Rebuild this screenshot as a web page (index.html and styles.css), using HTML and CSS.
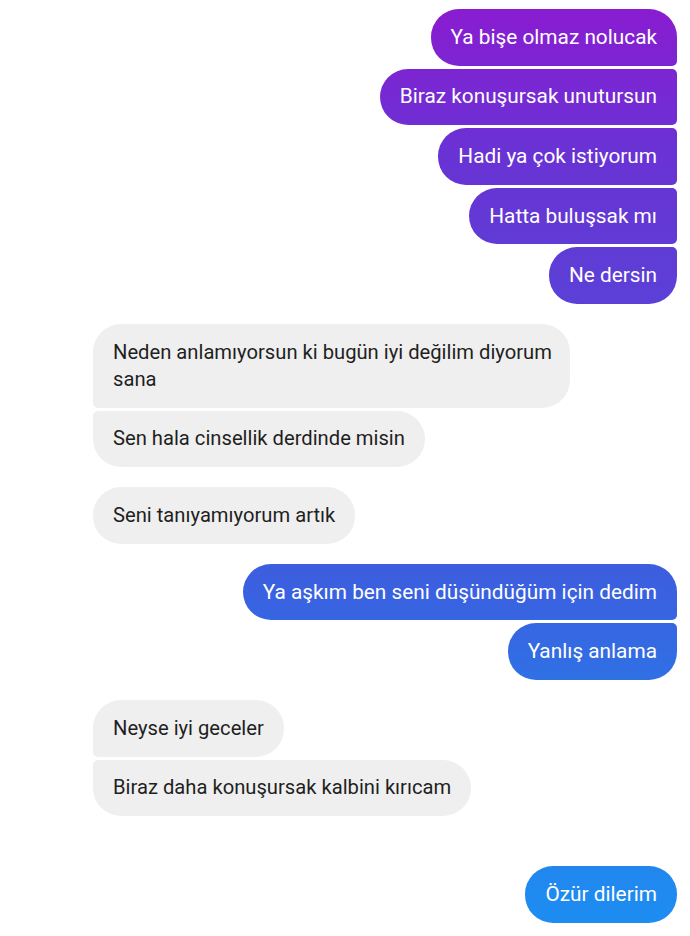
FILE: index.html
```html
<!DOCTYPE html>
<html lang="tr">
<head>
  <meta charset="UTF-8">
  <title>Sohbet</title>
  <link rel="stylesheet" href="styles.css">
</head>
<body>
  <div class="chat">
    <div class="group out">
      <div class="msg">Ya bişe olmaz nolucak</div>
      <div class="msg">Biraz konuşursak unutursun</div>
      <div class="msg">Hadi ya çok istiyorum</div>
      <div class="msg">Hatta buluşsak mı</div>
      <div class="msg">Ne dersin</div>
    </div>

    <div class="group in">
      <div class="msg wide">Neden anlamıyorsun ki bugün iyi değilim diyorum<br>sana</div>
      <div class="msg">Sen hala cinsellik derdinde misin</div>
    </div>

    <div class="group in">
      <div class="msg">Seni tanıyamıyorum artık</div>
    </div>

    <div class="group out">
      <div class="msg">Ya aşkım ben seni düşündüğüm için dedim</div>
      <div class="msg">Yanlış anlama</div>
    </div>

    <div class="group in">
      <div class="msg">Neyse iyi geceler</div>
      <div class="msg">Biraz daha konuşursak kalbini kırıcam</div>
    </div>

    <div class="group out last">
      <div class="msg">Özür dilerim</div>
    </div>
  </div>
</body>
</html>
```

FILE: styles.css
```css
* {
  box-sizing: border-box;
}

body {
  margin: 0;
  background: white;
  font-family: Roboto, "Liberation Sans", sans-serif;
  height: 936px;
  overflow: hidden;
}

.chat {
  display: flex;
  flex-direction: column;
  gap: 20px;
  padding-top: 9px;
}

.group {
  display: flex;
  flex-direction: column;
  gap: 3px;
}

.group.out {
  align-items: flex-end;
  margin-right: 13px;
}

.group.in {
  align-items: flex-start;
  margin-left: 93px;
}

.group.last {
  margin-top: 30px;
}

.msg {
  font-size: 20.8px;
  line-height: 27px;
  padding: 14.8px 20px;
  border-radius: 28px;
  white-space: nowrap;
}

.out .msg {
  color: white;
  background: linear-gradient(to bottom, #8b1bd0 0px, #6a32d4 150px, #5b40d7 300px, #3b5fdf 580px, #3070e5 680px, #1c8ff2 936px) fixed;
}

.in .msg {
  font-size: 20.2px;
  color: #1f1f1f;
  background: #efefef;
}

.in .msg.wide {
  padding-right: 18px;
}

/* corners that join the neighbour bubble */
.out .msg:not(:last-child) {
  border-bottom-right-radius: 5px;
}

.out .msg:not(:first-child) {
  border-top-right-radius: 5px;
}

.in .msg:not(:last-child) {
  border-bottom-left-radius: 5px;
}

.in .msg:not(:first-child) {
  border-top-left-radius: 5px;
}
```
